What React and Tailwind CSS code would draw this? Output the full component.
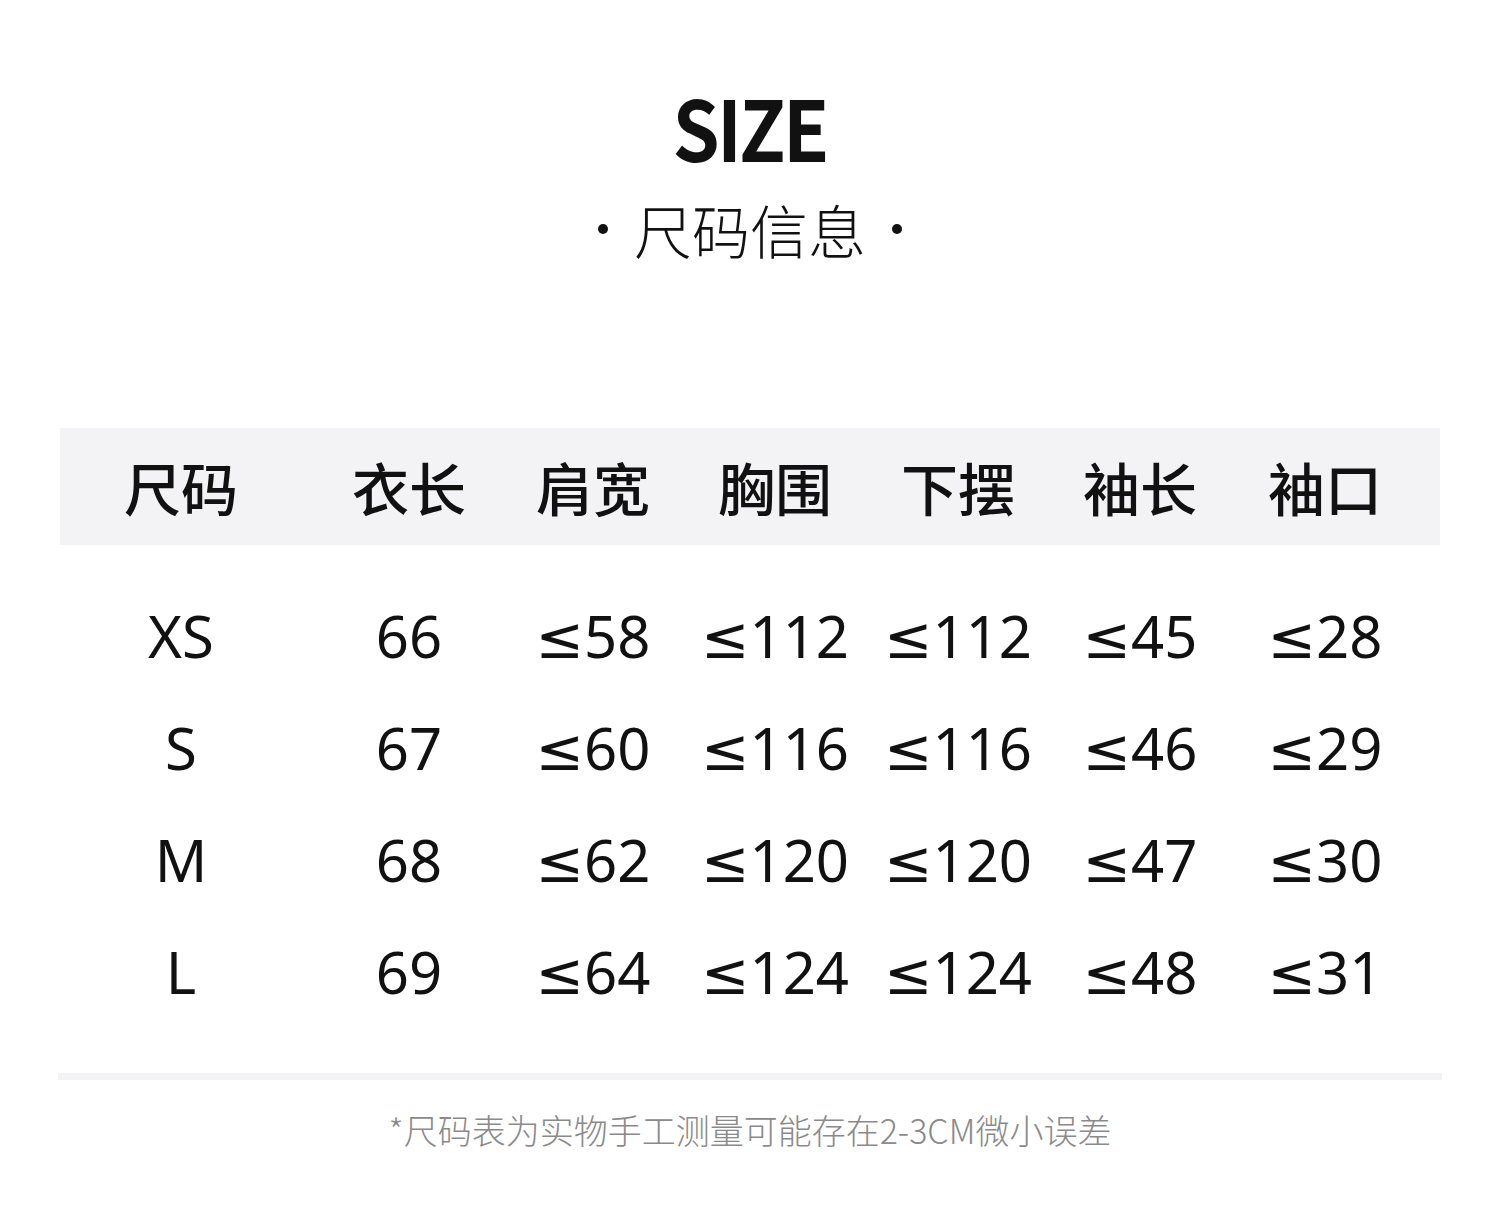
import React from "react";

const cols = "grid grid-cols-[242px_214px_154px_210px_156px_208px_162px]";

const headers = ["尺码", "衣长", "肩宽", "胸围", "下摆", "袖长", "袖口"];

const rows = [
  ["XS", "66", "≤58", "≤112", "≤112", "≤45", "≤28"],
  ["S", "67", "≤60", "≤116", "≤116", "≤46", "≤29"],
  ["M", "68", "≤62", "≤120", "≤120", "≤47", "≤30"],
  ["L", "69", "≤64", "≤124", "≤124", "≤48", "≤31"],
];

const App = () => {
  return (
    <div className="w-[1500px] h-[1225px] bg-white text-[#111] font-['Noto_Sans_CJK_SC','Noto_Sans',sans-serif]">
      {/* Title */}
      <div className="flex flex-col items-center pt-[80px]">
        <h1 className="text-[84px] leading-[92px] font-bold tracking-[-3px] scale-x-[0.9]">
          SIZE
        </h1>
        <div className="flex items-center gap-[26px] mt-[20px] text-[58px] leading-[74px] font-light">
          <span className="w-[10px] h-[10px] rounded-full bg-[#111]" />
          <span>尺码信息</span>
          <span className="w-[10px] h-[10px] rounded-full bg-[#111]" />
        </div>
      </div>

      {/* Table */}
      <div className="mx-[60px] mt-[162px]">
        <div className={`${cols} h-[117px] bg-[#f3f3f5] items-center`}>
          {headers.map((h) => (
            <div key={h} className="text-center text-[57px] font-medium leading-none">
              {h}
            </div>
          ))}
        </div>

        <div className="pt-[35px] font-['Noto_Sans','DejaVu_Sans',sans-serif]">
          {rows.map((r) => (
            <div key={r[0]} className={`${cols} h-[112px] items-center`}>
              {r.map((v, i) => (
                <div key={i} className="text-center text-[58px] font-normal leading-none">
                  {v}
                </div>
              ))}
            </div>
          ))}
        </div>
      </div>

      <div className="mx-[58px] mt-[45px] h-[7px] bg-[#f3f3f5]" />

      <p className="mt-[30px] text-center text-[34px] leading-[40px] text-[#8a8a8a] font-light">
        *尺码表为实物手工测量可能存在2-3CM微小误差
      </p>
    </div>
  );
};

export default App;
